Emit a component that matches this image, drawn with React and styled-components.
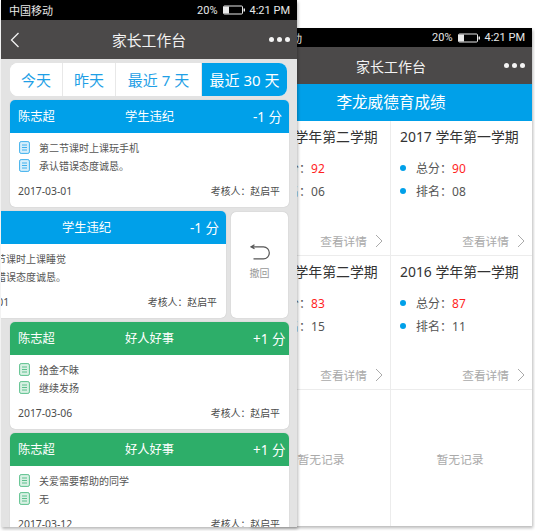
import React from "react";
import styled, { createGlobalStyle } from "styled-components";

const FONT = `"Noto Sans", "Noto Sans CJK SC", sans-serif`;

const GlobalStyle = createGlobalStyle`
  html, body {
    margin: 0;
    padding: 0;
    background: #fff;
    font-family: ${FONT};
  }
  * { box-sizing: border-box; }
`;

const Stage = styled.div`
  position: relative;
  width: 535px;
  height: 531px;
  overflow: hidden;
`;

// each phone is a window on the canvas
const Phone = styled.div`
  position: absolute;
  left: ${p => p.$left}px;
  top: ${p => p.$top}px;
  width: ${p => p.$width}px;
  height: ${p => p.$height}px;
  z-index: ${p => p.$z};
  background: ${p => p.$bg};
  box-shadow: 1px 2px 3px rgba(0, 0, 0, 0.28);
  overflow: hidden;
  display: flex;
  flex-direction: column;
`;

const StatusBar = styled.div`
  height: ${p => p.$h}px;
  flex: none;
  background: #000;
  color: #e8e8e8;
  font-size: 11px;
  display: flex;
  align-items: center;
  justify-content: space-between;
  padding: 0 7px 0 8px;
`;

const StatusRight = styled.div`
  font-family: Roboto, sans-serif;
  font-size: 11px;
  display: flex;
  align-items: center;
  gap: 5px;
`;

const NavBar = styled.div`
  height: ${p => p.$h}px;
  flex: none;
  background: #4b4949;
  color: #f2f2f2;
  font-size: ${p => p.$size}px;
  position: relative;
  display: flex;
  align-items: center;
  justify-content: center;
`;

const NavBack = styled.svg`
  position: absolute;
  left: 9px;
  top: 12px;
`;

const NavDots = styled.div`
  position: absolute;
  right: 7.5px;
  top: 50%;
  margin-top: -2.5px;
  display: flex;
  gap: 3px;
`;

const Dot = styled.span`
  width: 5px;
  height: 5px;
  border-radius: 50%;
  background: #f4f4f4;
`;

const PhoneBody = styled.div`
  flex: 1;
  overflow: hidden;
  padding: 4px 0 0 9px;
  display: flex;
  flex-direction: column;
  gap: 4px;
`;

const Tabs = styled.div`
  height: 33px;
  flex: none;
  width: 277px;
  background: #fff;
  border-radius: 8px;
  overflow: hidden;
  display: grid;
  grid-template-columns: 53px 53px 86px 1fr;
`;

const Tab = styled.div`
  display: flex;
  align-items: center;
  justify-content: center;
  font-size: 15px;
  color: ${p => (p.$active ? "#fff" : "#1f9fe6")};
  background: ${p => (p.$active ? "#00a0e9" : "#fff")};
  border-right: ${p => (p.$active ? "none" : "1px solid #e8e8e8")};
`;

const CardRow = styled.div`
  display: flex;
  gap: 5px;
  flex: none;
`;

const Card = styled.div`
  width: 279px;
  height: 107px;
  flex: none;
  margin-left: ${p => p.$offset || 0}px;
  background: #fff;
  border-radius: 5px;
  overflow: hidden;
  box-shadow: 0 0 1px rgba(0, 0, 0, 0.25);
`;

const CardHead = styled.div`
  height: 33px;
  background: ${p => p.$color};
  color: #fff;
  font-size: 12.3px;
  display: grid;
  grid-template-columns: 1fr auto 1fr;
  align-items: center;
  padding: 0 8px 2px 8px;
`;

const Score = styled.span`
  justify-self: end;
  width: 28px;
  white-space: nowrap;
  font-size: 13.5px;
`;

const CardLines = styled.div`
  padding: 6px 8px 0 9px;
  display: flex;
  flex-direction: column;
  gap: 2px;
`;

const Line = styled.div`
  height: 16.5px;
  display: flex;
  align-items: center;
  gap: 9px;
  font-size: 10px;
  color: #555;
  white-space: nowrap;
`;

const CardFoot = styled.div`
  display: flex;
  justify-content: space-between;
  align-items: center;
  font-size: 10.4px;
  color: #4c4c4c;
  padding: 10px 9px 0 8px;
`;

const Reviewer = styled.span`
  font-size: 9.9px;
`;

const UndoButton = styled.div`
  width: 57px;
  height: 106px;
  flex: none;
  margin-top: 1px;
  background: #fff;
  border-radius: 5px;
  box-shadow: 0 0 1px rgba(0, 0, 0, 0.25);
  display: flex;
  flex-direction: column;
  align-items: center;
  padding-top: 32px;
  gap: 5px;
  font-size: 10px;
  color: #999;
`;

const Banner = styled.div`
  height: 37px;
  flex: none;
  background: #00a0e9;
  color: #fff;
  font-size: 15.6px;
  display: flex;
  align-items: center;
  justify-content: center;
  padding-bottom: 2px;
`;

const Grid = styled.div`
  flex: 1;
  display: grid;
  grid-template-columns: 141px 141px;
  grid-template-rows: 135px 134px 1fr;
`;

const Cell = styled.div`
  border-bottom: 1px solid #ececec;
  border-right: ${p => (p.$left ? "1px solid #ececec" : "none")};
  padding: 5px 0 0 9px;
  position: relative;
  display: flex;
  flex-direction: column;
`;

const Term = styled.div`
  font-size: 13.9px;
  color: #333;
  height: 22px;
  line-height: 22px;
  white-space: nowrap;
`;

const Stats = styled.div`
  margin-top: 10px;
  display: flex;
  flex-direction: column;
  gap: 3px;
`;

const Stat = styled.div`
  height: 20px;
  display: flex;
  align-items: center;
  font-size: 12px;
  color: #555;
`;

const Bullet = styled.span`
  width: 6px;
  height: 6px;
  border-radius: 50%;
  background: #00a0e9;
  flex: none;
  margin-right: 10px;
`;

const Red = styled.span`
  color: #ff1f1f;
`;

const Detail = styled.div`
  position: absolute;
  right: 7px;
  bottom: 6px;
  display: flex;
  align-items: center;
  gap: 8px;
  font-size: 11.7px;
  color: #aaa;
`;

const Empty = styled.div`
  display: flex;
  align-items: center;
  justify-content: center;
  font-size: 11.8px;
  color: #aaa;
  padding: 0 ${p => (p.$left ? 0 : 3)}px 0 ${p => (p.$left ? 2 : 0)}px;
  border-right: ${p => (p.$left ? "1px solid #ececec" : "none")};
`;

const Battery = () => (
  <svg width="22" height="10" viewBox="0 0 22 10">
    <rect x="0.5" y="1" width="19" height="8" rx="1" fill="none" stroke="#e8e8e8" />
    <rect x="1" y="1.5" width="5" height="7" fill="#e8e8e8" />
    <rect x="20.5" y="3.5" width="1.5" height="3" fill="#e8e8e8" />
  </svg>
);

const NoteIcon = ({ color, tint }) => (
  <svg width="11" height="13" viewBox="0 0 11 13">
    <rect x="0.6" y="0.6" width="9.8" height="11.8" rx="1.5" fill={tint} stroke={color} strokeWidth="1" />
    <path d="M3 4h5M3 6.5h5M3 9h5" stroke={color} strokeWidth="1" fill="none" />
  </svg>
);

const Chevron = () => (
  <svg width="8" height="14" viewBox="0 0 8 14">
    <path d="M1 1l6 6-6 6" fill="none" stroke="#aaa" strokeWidth="1" />
  </svg>
);

const BLUE = { head: "#00a0e9", icon: "#3fb0ec", tint: "#d6eefb" };
const GREEN = { head: "#2dae69", icon: "#5cc08d", tint: "#d8f0e3" };

const ScoreCard = ({ theme, name, title, score, lines, date, offset }) => (
  <Card $offset={offset}>
    <CardHead $color={theme.head}>
      <span>{name}</span>
      <span>{title}</span>
      <Score>{score}</Score>
    </CardHead>
    <CardLines>
      {lines.map(text => (
        <Line key={text}>
          <NoteIcon color={theme.icon} tint={theme.tint} />
          <span>{text}</span>
        </Line>
      ))}
    </CardLines>
    <CardFoot>
      <span>{date}</span>
      <Reviewer>考核人：赵启平</Reviewer>
    </CardFoot>
  </Card>
);

const TermCell = ({ term, total, rank, left }) => (
  <Cell $left={left}>
    <Term>{term}</Term>
    <Stats>
      <Stat><Bullet /><span>总分：<Red>{total}</Red></span></Stat>
      <Stat><Bullet /><span>排名：{rank}</span></Stat>
    </Stats>
    <Detail>查看详情<Chevron /></Detail>
  </Cell>
);

const Status = ({ h }) => (
  <StatusBar $h={h}>
    <span>中国移动</span>
    <StatusRight>
      <span>20%</span>
      <Battery />
      <span>4:21 PM</span>
    </StatusRight>
  </StatusBar>
);

const Dots = () => (
  <NavDots>
    <Dot /><Dot /><Dot />
  </NavDots>
);

export default function App() {
  return (
    <Stage>
      <GlobalStyle />

      <Phone $left={250} $top={28} $width={282} $height={498} $z={1} $bg="#fff">
        <Status h={19} />
        <NavBar $h={37} $size={14}>
          家长工作台
          <Dots />
        </NavBar>
        <Banner>李龙威德育成绩</Banner>
        <Grid>
          <TermCell left term="2017 学年第二学期" total="92" rank="06" />
          <TermCell term="2017 学年第一学期" total="90" rank="08" />
          <TermCell left term="2016 学年第二学期" total="83" rank="15" />
          <TermCell term="2016 学年第一学期" total="87" rank="11" />
          <Empty $left>暂无记录</Empty>
          <Empty>暂无记录</Empty>
        </Grid>
      </Phone>

      <Phone $left={1} $top={0} $width={296} $height={527} $z={2} $bg="#e3e3e3">
        <Status h={20} />
        <NavBar $h={39} $size={14.8}>
          <NavBack width="10" height="16" viewBox="0 0 10 16">
            <path d="M8.5 1L1.5 8l7 7" fill="none" stroke="#f2f2f2" strokeWidth="1.3" />
          </NavBack>
          家长工作台
          <Dots />
        </NavBar>
        <PhoneBody>
          <Tabs>
            <Tab>今天</Tab>
            <Tab>昨天</Tab>
            <Tab>最近 7 天</Tab>
            <Tab $active>最近 30 天</Tab>
          </Tabs>
          <CardRow>
            <ScoreCard theme={BLUE} name="陈志超" title="学生违纪" score="-1 分" date="2017-03-01"
              lines={["第二节课时上课玩手机", "承认错误态度诚恳。"]} />
          </CardRow>
          <CardRow>
            <ScoreCard theme={BLUE} name="陈志超" title="学生违纪" score="-1 分" date="2017-03-01" offset={-63}
              lines={["第二节课时上课睡觉", "承认错误态度诚恳。"]} />
            <UndoButton>
              <svg width="20" height="16" viewBox="0 0 20 16">
                <path d="M4.5 0.8L1 2.8l3.5 2M1 2.8H13.5a5.8 6 0 0 1 0 12H3.5" fill="none" stroke="#555" strokeWidth="1.2" />
              </svg>
              撤回
            </UndoButton>
          </CardRow>
          <CardRow>
            <ScoreCard theme={GREEN} name="陈志超" title="好人好事" score="+1 分" date="2017-03-06"
              lines={["拾金不昧", "继续发扬"]} />
          </CardRow>
          <CardRow>
            <ScoreCard theme={GREEN} name="陈志超" title="好人好事" score="+1 分" date="2017-03-12"
              lines={["关爱需要帮助的同学", "无"]} />
          </CardRow>
        </PhoneBody>
      </Phone>
    </Stage>
  );
}
